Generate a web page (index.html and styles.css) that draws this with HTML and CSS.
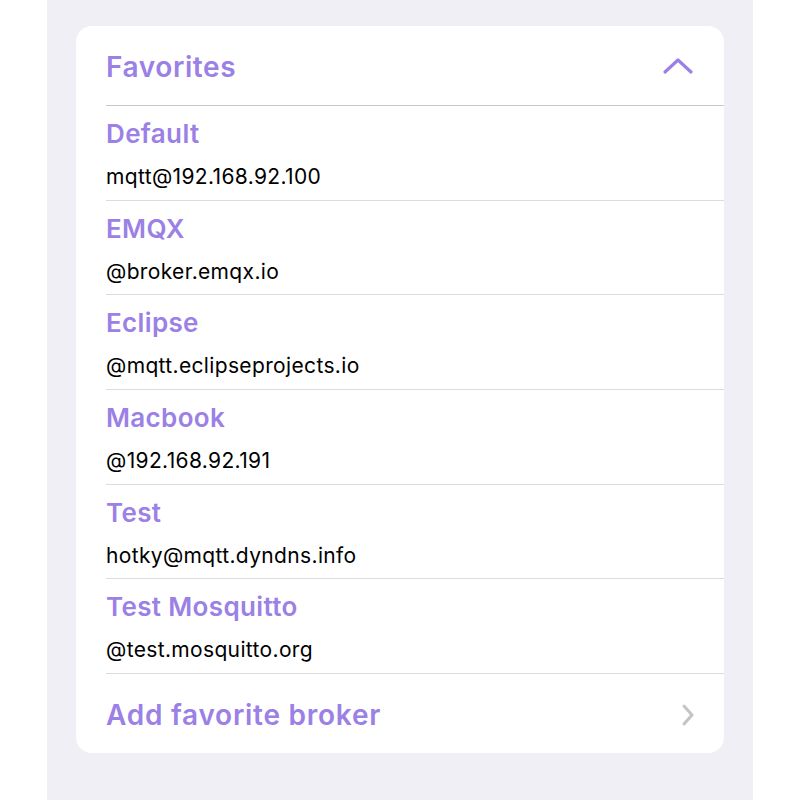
FILE: index.html
```html
<!DOCTYPE html>
<html>
<head>
<meta charset="utf-8">
<link rel="stylesheet" href="styles.css">
</head>
<body>
<div class="panel">
  <div class="card">
    <div class="header">
      <span class="header-title">Favorites</span>
      <svg class="chev-up" width="32" height="20" viewBox="0 0 32 20"><path d="M3 16 L16 4 L29 16" fill="none" stroke="#9b80e6" stroke-width="3.2" stroke-linecap="round" stroke-linejoin="round"/></svg>
    </div>
    <div class="row"><div class="title">Default</div><div class="sub">mqtt@192.168.92.100</div></div>
    <div class="row"><div class="title">EMQX</div><div class="sub">@broker.emqx.io</div></div>
    <div class="row"><div class="title">Eclipse</div><div class="sub">@mqtt.eclipseprojects.io</div></div>
    <div class="row"><div class="title">Macbook</div><div class="sub">@192.168.92.191</div></div>
    <div class="row"><div class="title">Test</div><div class="sub">hotky@mqtt.dyndns.info</div></div>
    <div class="row"><div class="title">Test Mosquitto</div><div class="sub">@test.mosquitto.org</div></div>
    <div class="add">
      <span class="add-title">Add favorite broker</span>
      <svg class="chev-right" width="16" height="26" viewBox="0 0 16 26"><path d="M4 4 L12 13 L4 22" fill="none" stroke="#c4c4c7" stroke-width="3" stroke-linecap="round" stroke-linejoin="round"/></svg>
    </div>
  </div>
</div>
</body>
</html>
```

FILE: styles.css
```css
html, body {
  margin: 0;
  padding: 0;
  background: #ffffff;
}
body {
  font-family: Inter, "Noto Sans", sans-serif;
}
.panel {
  margin-left: 47px;
  width: 706px;
  height: 800px;
  box-sizing: border-box;
  background: #f0eff5;
  padding: 26px 29px 0 29px;
}
.card {
  background: #ffffff;
  border-radius: 16px;
  overflow: hidden;
}
.header {
  height: 80px;
  margin-left: 30px;
  border-bottom: 1px solid #c8c7cc;
  display: flex;
  align-items: center;
  justify-content: space-between;
  box-sizing: border-box;
  padding-right: 30px;
}
.header-title {
  font-size: 28px;
  font-weight: 600;
  letter-spacing: 0.6px;
  color: #9b80e6;
  margin-top: 2px;
}
.chev-up {
  display: block;
}
.row {
  height: 94.67px;
  margin-left: 30px;
  border-bottom: 1px solid #dcdce0;
  box-sizing: border-box;
  display: flex;
  flex-direction: column;
  padding-top: 12px;
}
.title {
  font-size: 26px;
  font-weight: 600;
  letter-spacing: 0.35px;
  color: #9b80e6;
  line-height: 32px;
}
.sub {
  font-size: 21px;
  letter-spacing: 0.35px;
  color: #000;
  line-height: 26px;
  margin-top: 14px;
}
.add {
  height: 79px;
  margin-left: 30px;
  padding-right: 28px;
  display: flex;
  align-items: center;
  justify-content: space-between;
}
.add-title {
  font-size: 28px;
  font-weight: 600;
  letter-spacing: 0.75px;
  color: #9b80e6;
  margin-top: 3px;
}
.chev-right {
  display: block;
  margin-top: 3px;
}
```
